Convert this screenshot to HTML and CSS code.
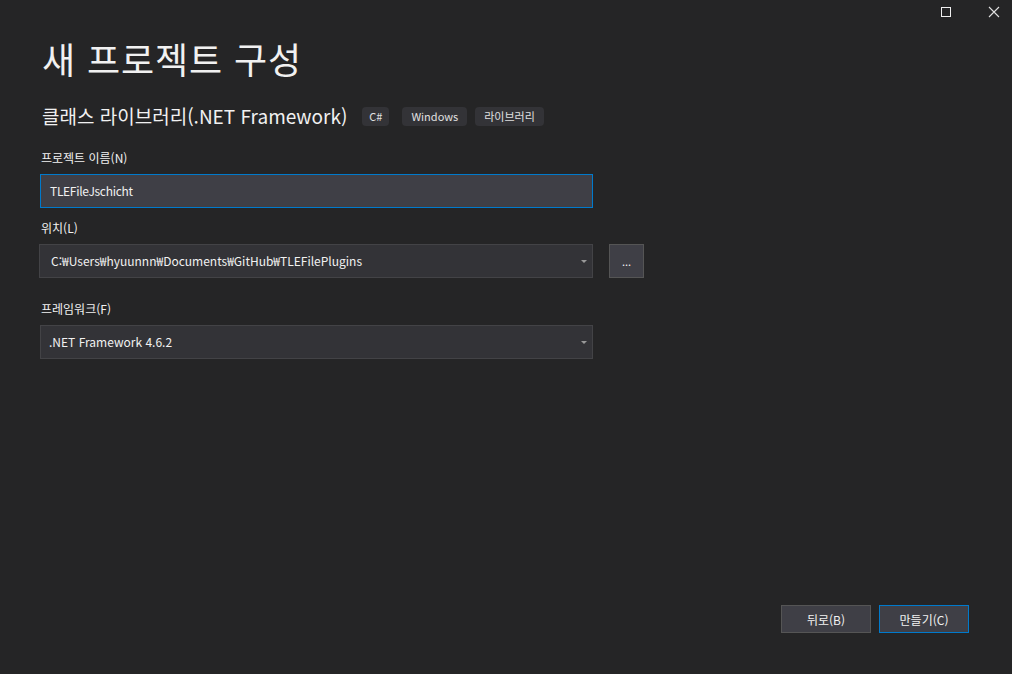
FILE: index.html
```html
<!DOCTYPE html>
<html lang="ko">
<head>
<meta charset="utf-8">
<title>새 프로젝트 구성</title>
<link rel="stylesheet" href="styles.css">
</head>
<body>
<div class="window">
  <div class="titlebar">
    <div class="winbtn" aria-label="최대화">
      <svg width="12" height="12" viewBox="0 0 12 12"><rect x="1.5" y="1.5" width="9" height="9" fill="none" stroke="#f0f0f0" stroke-width="1"/></svg>
    </div>
    <div class="winbtn" aria-label="닫기">
      <svg width="12" height="12" viewBox="0 0 12 12"><path d="M1 1 L11 11 M11 1 L1 11" stroke="#e0e0e0" stroke-width="1.1"/></svg>
    </div>
  </div>
  <div class="content">
    <h1 class="title">새 프로젝트 구성</h1>
    <div class="template-row">
      <span class="template-name">클래스 라이브러리(.NET Framework)</span>
      <span class="tag tag-cs">C#</span>
      <span class="tag">Windows</span>
      <span class="tag">라이브러리</span>
    </div>

    <div class="field field-name">
      <label class="label">프로젝트 이름(N)</label>
      <div class="input focused">TLEFileJschicht</div>
    </div>

    <div class="field field-loc">
      <label class="label">위치(L)</label>
      <div class="loc-row">
        <div class="select"><span>C:₩Users₩hyuunnn₩Documents₩GitHub₩TLEFilePlugins</span><i class="caret"></i></div>
        <div class="browse">...</div>
      </div>
    </div>

    <div class="field field-fw">
      <label class="label">프레임워크(F)</label>
      <div class="select"><span>.NET Framework 4.6.2</span><i class="caret"></i></div>
    </div>
  </div>
  <div class="footer">
    <button class="btn">뒤로(B)</button>
    <button class="btn primary">만들기(C)</button>
  </div>
</div>
</body>
</html>
```

FILE: styles.css
```css
* { box-sizing: border-box; }
html, body { margin: 0; padding: 0; }
body {
  background: #252526;
  color: #f1f1f1;
  font-family: "Noto Sans CJK KR", "Noto Sans", sans-serif;
  width: 1012px;
  height: 674px;
  overflow: hidden;
}
.window {
  height: 674px;
  display: flex;
  flex-direction: column;
}
.titlebar {
  height: 24px;
  display: flex;
  justify-content: flex-end;
  gap: 12px;
}
.winbtn {
  width: 36px;
  height: 24px;
  display: flex;
  align-items: center;
  justify-content: center;
}
.content {
  flex: 1;
  padding-left: 40px;
}
.title {
  margin: 10px 0 0 2px;
  font-size: 36px;
  font-weight: 400;
  line-height: 48px;
  letter-spacing: 0.9px;
  color: #f1f1f1;
}
.template-row {
  display: flex;
  align-items: center;
  margin-top: 22px;
  margin-left: 2px;
  height: 24px;
}
.template-name {
  font-size: 19px;
  line-height: 24px;
  margin-right: 15px;
}
.tag {
  background: #333337;
  border-radius: 4px;
  font-size: 11px;
  height: 19px;
  line-height: 19px;
  padding: 0 9px;
  margin-right: 8px;
  color: #e0e0e0;
}
.tag-cs { padding: 0 7px; margin-right: 13px; }
.field { display: flex; flex-direction: column; }
.label {
  font-size: 12px;
  line-height: 16px;
  color: #f1f1f1;
  margin-left: 1px;
}
.field-name { margin-top: 22px; }
.field-name .label { margin-bottom: 8px; }
.input {
  width: 553px;
  height: 34px;
  background: #3f3f46;
  border: 1px solid #007acc;
  font-size: 12px;
  line-height: 32px;
  padding-left: 9px;
  color: #f1f1f1;
  letter-spacing: -0.3px;
}
.field-loc { margin-top: 12px; }
.field-loc .label { margin-bottom: 8px; }
.loc-row { display: flex; gap: 16px; }
.select {
  width: 553px;
  height: 34px;
  background: #333337;
  border: 1px solid #434346;
  font-size: 12px;
  line-height: 32px;
  padding-left: 11px;
  display: flex;
  justify-content: space-between;
  align-items: center;
  color: #f1f1f1;
}
.field-loc .select { margin-left: -1px; width: 554px; }
.field-fw .select { padding-left: 8px; }
.caret {
  width: 0; height: 0;
  border-left: 3.5px solid transparent;
  border-right: 3.5px solid transparent;
  border-top: 3.5px solid #999999;
  margin-right: 5px;
}
.browse {
  width: 35px;
  height: 34px;
  background: #3f3f46;
  border: 1px solid #555555;
  font-size: 11px;
  display: flex;
  align-items: center;
  justify-content: center;
  color: #f1f1f1;
}
.field-fw { margin-top: 23px; }
.field-fw .label { margin-bottom: 8px; }
.footer {
  display: flex;
  justify-content: flex-end;
  gap: 8px;
  padding-right: 43px;
  padding-bottom: 41px;
}
.btn {
  width: 90px;
  height: 28px;
  background: #3f3f46;
  border: 1px solid #555555;
  color: #f1f1f1;
  font-family: inherit;
  font-size: 12px;
  padding: 0;
}
.btn.primary { border-color: #007acc; }
```
